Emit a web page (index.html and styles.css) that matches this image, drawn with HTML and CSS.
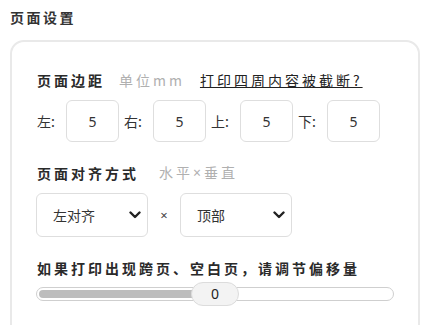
FILE: index.html
```html
<!DOCTYPE html>
<html lang="zh-CN">
<head>
	<meta charset="UTF-8">
	<title>页面设置</title>
	<link rel="stylesheet" href="styles.css">
</head>
<body>
	<h1 class="title">页面设置</h1>
	<div class="card">
		<!-- 页面边距 -->
		<div class="heading">
			<span class="heading-main">页面边距</span>
			<span class="hint hint-unit">单位mm</span>
			<a class="help" href="#">打印四周内容被截断?</a>
		</div>
		<div class="margins">
			<label class="side">左:</label><input class="num" type="text" value="5">
			<label class="side">右:</label><input class="num" type="text" value="5">
			<label class="side">上:</label><input class="num" type="text" value="5">
			<label class="side">下:</label><input class="num" type="text" value="5">
		</div>

		<!-- 页面对齐方式 -->
		<div class="heading heading-align">
			<span class="heading-main">页面对齐方式</span>
			<span class="hint hint-align">水平<span class="latin">×</span>垂直</span>
		</div>
		<div class="align-row">
			<div class="select">
				<span>左对齐</span>
				<svg class="chevron" width="12" height="8" viewBox="0 0 12 8"><path d="M1.5 1.5 L6 6 L10.5 1.5" fill="none" stroke="#222" stroke-width="2.4" stroke-linecap="round" stroke-linejoin="round"/></svg>
			</div>
			<span class="times">×</span>
			<div class="select">
				<span>顶部</span>
				<svg class="chevron" width="12" height="8" viewBox="0 0 12 8"><path d="M1.5 1.5 L6 6 L10.5 1.5" fill="none" stroke="#222" stroke-width="2.4" stroke-linecap="round" stroke-linejoin="round"/></svg>
			</div>
		</div>

		<!-- 偏移量 -->
		<div class="heading heading-offset">
			<span class="heading-main">如果打印出现跨页、空白页，请调节偏移量</span>
		</div>
		<div class="slider">
			<div class="track">
				<div class="fill" style="width: 50%"></div>
			</div>
			<div class="thumb" style="left: 50%">0</div>
		</div>
	</div>
</body>
</html>
```

FILE: styles.css
```css
body {
	margin: 0;
	padding: 0 14px 0 10px;
	background-color: #fff;
	font-family: "Noto Sans CJK SC", "Noto Sans", sans-serif;
	color: #333;
}
.title {
	margin: 7px 0 0 0;
	font-size: 14px;
	line-height: 20px;
	font-weight: bold;
	letter-spacing: 2.5px;
	color: #333;
}
.card {
	box-sizing: border-box;
	width: 410px;
	margin-top: 13px;
	padding: 28px 24px 60px 24px;
	border: 2px solid #e9e9e9;
	border-radius: 14px;
}
.heading {
	display: flex;
	align-items: center;
	padding-left: 1px;
	font-size: 14px;
	line-height: 20px;
	letter-spacing: 3px;
	white-space: nowrap;
}
.heading-main {
	font-weight: bold;
	color: #2a2a2a;
}
.hint {
	color: #b0b0b0;
}
.hint-unit {
	margin-left: 14px;
}
.hint-align {
	margin-left: 20px;
}
.latin {
	font-family: "Noto Sans", sans-serif;
}
.help {
	margin-left: 15px;
	color: #222;
	text-decoration: underline;
}
.margins {
	display: flex;
	align-items: center;
	gap: 5px;
	margin-top: 10px;
	padding-left: 1px;
}
.side {
	width: 24px;
	font-size: 14px;
	color: #333;
	white-space: nowrap;
}
.num {
	box-sizing: border-box;
	width: 53px;
	height: 42px;
	border: 1px solid #dedede;
	border-radius: 6px;
	text-align: center;
	font-family: "Noto Sans", sans-serif;
	font-size: 14px;
	color: #333;
	padding: 0;
}
.heading-align {
	margin-top: 20px;
}
.align-row {
	display: flex;
	align-items: center;
	gap: 11px;
	margin-top: 10px;
}
.select {
	box-sizing: border-box;
	display: flex;
	align-items: center;
	justify-content: space-between;
	width: 112px;
	height: 44px;
	padding: 0 6px 0 16px;
	border: 1px solid #dedede;
	border-radius: 6px;
	font-size: 14px;
	color: #333;
}
.times {
	width: 10px;
	text-align: center;
	font-family: "Noto Sans", sans-serif;
	font-size: 13px;
	color: #444;
}
.heading-offset {
	margin-top: 21px;
}
.slider {
	position: relative;
	height: 24px;
	margin-top: 4px;
}
.track {
	box-sizing: border-box;
	position: absolute;
	left: 0;
	right: 0;
	top: 5px;
	height: 14px;
	padding: 2px;
	border: 1px solid #cfcfcf;
	border-radius: 7px;
	background-color: #fff;
}
.fill {
	height: 100%;
	background-color: #bdbdbd;
	border-radius: 5px 0 0 5px;
}
.thumb {
	box-sizing: border-box;
	position: absolute;
	top: 0;
	width: 48px;
	height: 24px;
	margin-left: -24px;
	border: 1px solid #dcdcdc;
	border-radius: 12px;
	background-color: #f3f3f3;
	text-align: center;
	font-family: "Noto Sans", sans-serif;
	font-size: 14px;
	line-height: 22px;
	color: #222;
}
```
